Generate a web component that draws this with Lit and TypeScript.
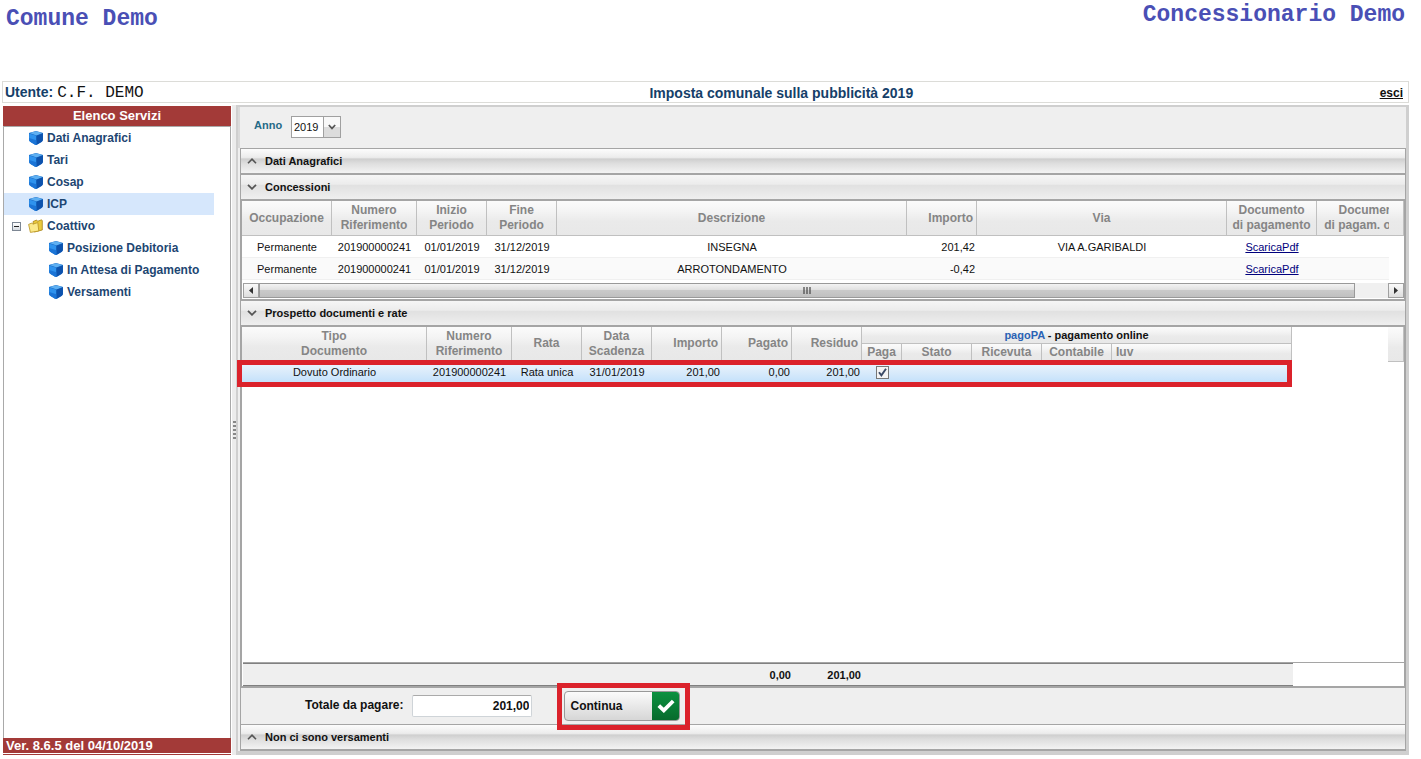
import { LitElement, html, css, svg } from "lit";
import { customElement, property, state } from "lit/decorators.js";
import { classMap } from "lit/directives/class-map.js";

interface Concessione {
  occupazione: string;
  numero: string;
  inizio: string;
  fine: string;
  descrizione: string;
  importo: string;
  via: string;
}

const CONCESSIONI: Concessione[] = [
  { occupazione: "Permanente", numero: "201900000241", inizio: "01/01/2019", fine: "31/12/2019", descrizione: "INSEGNA", importo: "201,42", via: "VIA A.GARIBALDI" },
  { occupazione: "Permanente", numero: "201900000241", inizio: "01/01/2019", fine: "31/12/2019", descrizione: "ARROTONDAMENTO", importo: "-0,42", via: "" },
];

const chevronUp = html`<svg class="chev" width="10" height="6" viewBox="0 0 10 6">${svg`<path d="M1 5.2 5 1.2 9 5.2" fill="none" stroke="#555" stroke-width="1.6"/>`}</svg>`;
const chevronDown = html`<svg class="chev" width="10" height="6" viewBox="0 0 10 6">${svg`<path d="M1 .8 5 4.8 9 .8" fill="none" stroke="#555" stroke-width="1.8"/>`}</svg>`;

const cubeIcon = html`<svg width="14" height="14" viewBox="0 0 14 14" aria-hidden="true">
  <path d="M0 2 7 0l7 2v6.5q0 1.6-1.4 2.4L8 13.8q-1 .5-2 0L1.4 10.9Q0 10 0 8.5z" fill="#1766c0"/>
  <path d="M.3 2.1 7 .2l6.7 1.9L7.6 4.4z" fill="#5fb0f2"/>
  <path d="M.2 2.5 7.4 4.8v9Q6.6 14 6 13.6L1.4 10.7Q.2 10 .2 8.4z" fill="#2f93ee"/>
  <path d="M7.4 4.8l6.4-2.3v6q0 1.4-1.2 2.2L7.4 13.8z" fill="#0d52ad"/>
  <path d="M.2 7 7.4 9.2v4.6Q6.6 14 6 13.6L1.4 10.7Q.2 10 .2 8.4z" fill="#1b74d6"/>
</svg>`;

const folderIcon = html`<svg width="15" height="14" viewBox="0 0 15 14" aria-hidden="true">
  <path d="M5 2.6 8.6 1l1 1.3L13.6.8l.7 1V11l-8 2z" fill="#e9c93c" stroke="#a8841a" stroke-width=".8"/>
  <path d="M.6 5.4 3.8 4l1 1.2 5-1.6 1 8.4-8.4 1.4z" fill="#fbe98a" stroke="#b8921f" stroke-width=".8"/>
</svg>`;

@customElement("service-item")
export class ServiceItem extends LitElement {
  @property() label = "";
  @property({ type: Number }) level = 0;
  @property({ type: Boolean }) active = false;
  @property({ type: Boolean }) folder = false;

  static styles = css`
    :host { display: block; margin-right: 16px; }
    .item {
      display: flex; align-items: center; gap: 4px; height: 22px; padding-left: 25px;
      font: bold 12px/22px "Liberation Sans", Arial, sans-serif; color: #1d4672; text-decoration: none;
    }
    .nested { padding-left: 45px; }
    .folder { padding-left: 8px; }
    .active { background: #d6e7fc; }
    .toggle {
      width: 9px; height: 9px; padding: 0; margin-right: 3px; border: 1px solid #7d8794;
      background: linear-gradient(#fff, #d5dae0); display: grid; place-items: center;
    }
    .toggle::before { content: ""; width: 5px; height: 1px; background: #222; }
    svg { flex: none; }
  `;

  render() {
    const cls = classMap({ item: true, nested: this.level > 0, folder: this.folder, active: this.active });
    return this.folder
      ? html`<div class=${cls}><button class="toggle" aria-label="Comprimi"></button>${folderIcon}<span>${this.label}</span></div>`
      : html`<a class=${cls} href="#">${cubeIcon}<span>${this.label}</span></a>`;
  }
}

@customElement("section-bar")
export class SectionBar extends LitElement {
  @property() label = "";
  @property({ type: Boolean }) open = false;

  static styles = css`
    :host { display: block; }
    .bar {
      display: flex; align-items: center; gap: 8px; width: 100%; height: 24px; padding: 0 6px; border: 0;
      background: linear-gradient(#fcfcfc 0%, #ececec 35%, #cfcfcf 42%, #dedede 60%, #f3f3f3 100%);
      font: bold 11px/24px "Liberation Sans", Arial, sans-serif; color: #111; text-align: left;
    }
    .open { background: linear-gradient(#f6f6f6 0%, #ececec 38%, #e1e1e1 44%, #e6e6e6 65%, #efefef 100%); }
    .chev { flex: none; }
  `;

  render() {
    return html`<button class=${classMap({ bar: true, open: this.open })} aria-expanded=${this.open}>
      ${this.open ? chevronDown : chevronUp}<span>${this.label}</span>
    </button>`;
  }
}

@customElement("app-root")
export class AppRoot extends LitElement {
  @state() private anno = "2019";

  static styles = css`
    :host {
      display: flex; flex-direction: column; box-sizing: border-box; min-height: 100vh;
      padding: 0 12px 4px 2px; background: #fff; color: #111;
      font: 11px/16px "Liberation Sans", Arial, sans-serif;
    }
    * { box-sizing: border-box; }

    .brand {
      display: flex; justify-content: space-between; height: 81px; padding: 2px 4px 0;
      font: bold 23px/26px "Liberation Mono", "Courier New", monospace; color: #4a4fb5;
    }
    .brand .left { padding-top: 4px; }

    .userbar {
      display: grid; grid-template-columns: 178px 1fr auto; align-items: center; height: 22px;
      padding: 0 5px 0 2px; border: 1px solid #dcdcd8;
      font-size: 14px; font-weight: bold; color: #154069; line-height: 20px;
    }
    .userbar .code { margin-left: 4px; font: 16px/20px "Liberation Mono", "Courier New", monospace; color: #111; }
    .userbar .title { margin: 0; font-size: 14px; text-align: center; }
    .userbar .exit { font-size: 12px; color: #111; }

    .body { flex: 1; display: grid; grid-template-columns: 229px 5px 1fr; margin-top: 2px; }

    .side { display: flex; flex-direction: column; margin: 1px 0 0 1px; }
    .side .head { height: 20px; background: #a33a38; color: #fff; text-align: center; font: bold 13px/20px "Liberation Sans", Arial, sans-serif; }
    .side nav { flex: 1; border: 1px solid #a9a9a9; border-width: 1px 1px 0; }
    .side .foot {
      height: 17px; padding-left: 3px; color: #fff; font: bold 13px/16px "Liberation Sans", Arial, sans-serif;
      background: linear-gradient(#a33a38 15px, #fff 15px 16px, #a33a38 16px);
    }

    .split { display: grid; place-items: center; background: #ececec; border-left: 1px solid #fff; }
    .grip { width: 3px; height: 18px; background: repeating-linear-gradient(#888 0 2px, transparent 2px 4px); }

    .main {
      display: flex; flex-direction: column; min-width: 0;
      border: solid #cfcfcf; border-width: 2px 3px 4px 2px; background: #efefef;
    }
    .year { display: flex; align-items: flex-start; height: 41px; padding: 9px 0 0 14px; border-left: 2px solid #dadada; }
    .year label { width: 37px; font: bold 11px/18px "Liberation Sans", Arial, sans-serif; color: #256a87; }
    .combo { display: grid; width: 50px; height: 22px; }
    .combo > * { grid-area: 1 / 1; }
    .combo select {
      appearance: none; width: 50px; height: 22px; padding: 0 0 0 2px; border: 1px solid #a0a0a0; border-radius: 0;
      background: #fff; font: 11px/20px "Liberation Sans", Arial, sans-serif; color: #111;
    }
    .combo .arrow {
      justify-self: end; display: grid; place-items: center; width: 18px; height: 22px; pointer-events: none;
      border: 1px solid #a0a0a0; background: linear-gradient(#f8f8f8 50%, #dcdcdc 50%);
    }

    .stack { flex: 1; display: flex; flex-direction: column; margin-left: 2px; border: 1px solid #a5a5a5; border-width: 1px 1px 2px; }
    .line { border-top: 2px solid #a5a5a5; }
    .pane { border: solid #a5a5a5; border-width: 2px 1px; background: #fff; min-width: 0; }

    table { border-collapse: separate; border-spacing: 0; table-layout: fixed; }
    th {
      padding: 0; border: solid #c0c0c0; border-width: 0 1px 1px 0; font: bold 12px/15px "Liberation Sans", Arial, sans-serif; color: #858585;
      text-align: center;
    }
    td { height: 22px; padding: 0; text-align: center; font-size: 11px; line-height: 16px; white-space: nowrap; }
    th.num { text-align: right; padding-right: 3px; }
    td.num { text-align: right; padding-right: 2px; }
    td a { color: #00007d; }
    th, .corner { background: linear-gradient(#fbfbfb, #f4f4f4 30%, #eaeaea 60%, #e8e8e8); }

    .concessioni { display: grid; grid-template-columns: minmax(0, 1fr) 15px; grid-template-rows: 79px 19px; }
    .clip { overflow: hidden; }
    .concessioni table { width: 1185px; }
    .concessioni thead th { height: 35px; }
    .concessioni td { border-bottom: 1px solid #f0f0f0; }
    .concessioni tbody tr:nth-child(2) { background: #fafafa; }
    .corner { height: 35px; border: solid #c0c0c0; border-width: 0 1px 1px 0; }
    .scroll { grid-column: 1 / 3; display: flex; height: 15px; margin: 3px 0 0 1px; background: #f0f0f0; }
    .scroll button { width: 16px; padding: 0; border: 1px solid #a0a0a0; background: linear-gradient(#fafafa, #dedede); display: grid; place-items: center; }
    .thumb {
      flex: 1; display: grid; place-items: center; margin-right: 33px; border: 1px solid #999;
      background: linear-gradient(#f3f3f3, #e0e0e0 45%, #c9c9c9 50%, #c0c0c0);
    }

    .documenti { position: relative; flex: 1; display: flex; flex-direction: column; border-left-width: 1px; }
    .documenti .top { display: flex; justify-content: space-between; }
    .documenti table { width: 1050px; }
    .documenti .corner { width: 16px; }
    .documenti thead tr { height: 17px; }
    .documenti .group { color: #111; font-size: 11px; text-align: center; }
    .group span { color: #2a62b4; }
    th.iuv { text-align: left; padding-left: 4px; }
    .picked { background: linear-gradient(#eef6fe, #dcecfb 45%, #c2e0fb); }
    .check {
      appearance: none; display: block; width: 13px; height: 13px; margin: 0 auto; border: 1px solid #777; background: #f4f4f4;
    }
    .tick { display: grid; place-items: center; width: 13px; height: 13px; margin: 0 auto; }
    .tick > * { grid-area: 1 / 1; pointer-events: none; }
    .space { flex: 1; }
    .sums { border-top: 1px solid #a5a5a5; margin-left: 1px; }
    .sums td { height: 23px; font-weight: bold; background: #efefef; border: solid #808080; border-width: 1px 0; }

    .mark { position: absolute; border: 5px solid #db222b; pointer-events: none; }
    .mark-row { left: -5px; top: 33px; width: 1055px; height: 27px; }
    .mark-go { inset: -8px -10px -9px -7px; }

    .total { display: flex; align-items: flex-start; height: 37px; padding: 3px 0 0 64px; border-bottom: 1px solid #a5a5a5; }
    .total label { font: bold 12px/28px "Liberation Sans", Arial, sans-serif; }
    .total input {
      width: 120px; height: 22px; margin: 4px 32px 0 9px; padding: 0 2px; border: 1px solid #cfd4d8; border-top-color: #aaa; border-radius: 2px;
      background: #fff; text-align: right; font: bold 12px/20px "Liberation Sans", Arial, sans-serif; color: #111;
    }
    .go { position: relative; }
    .continua {
      display: flex; justify-content: space-between; align-items: center; width: 116px; height: 30px; padding: 0 0 0 5px;
      border: 1px solid #999; border-radius: 4px; overflow: hidden; background: linear-gradient(#fbfbfb, #d6d6d6);
      font: bold 12px/28px "Liberation Sans", Arial, sans-serif; color: #111;
    }
    .continua .ok { display: grid; place-items: center; width: 27px; height: 28px; background: linear-gradient(#0c9140, #076b2d); }
  `;

  private renderConcessioni() {
    return html`
      <div class="pane concessioni">
        <div class="clip">
          <table>
            <colgroup>
              ${[90, 85, 70, 70, 350, 70, 250, 90, 110].map((w) => html`<col style="width:${w}px" />`)}
            </colgroup>
            <thead>
              <tr>
                <th>Occupazione</th><th>Numero<br />Riferimento</th><th>Inizio<br />Periodo</th><th>Fine<br />Periodo</th>
                <th>Descrizione</th><th class="num">Importo</th><th>Via</th>
                <th>Documento<br />di pagamento</th><th>Documento<br />di pagam. online</th>
              </tr>
            </thead>
            <tbody>
              ${CONCESSIONI.map((r) => html`<tr>
                <td>${r.occupazione}</td><td>${r.numero}</td><td>${r.inizio}</td><td>${r.fine}</td><td>${r.descrizione}</td>
                <td class="num">${r.importo}</td><td>${r.via}</td><td><a href="#">ScaricaPdf</a></td><td></td>
              </tr>`)}
            </tbody>
          </table>
        </div>
        <div class="corner"></div>
        <div class="scroll">
          <button aria-label="Scorri a sinistra"><svg width="4" height="7" viewBox="0 0 4 7"><path d="M4 0v7L0 3.5z" fill="#333"/></svg></button>
          <div class="thumb"><svg width="8" height="7" viewBox="0 0 8 7"><path d="M1 0v7M4 0v7M7 0v7" stroke="#444" stroke-width="1.2"/></svg></div>
          <button aria-label="Scorri a destra"><svg width="4" height="7" viewBox="0 0 4 7"><path d="M0 0v7l4-3.5z" fill="#333"/></svg></button>
        </div>
      </div>`;
  }

  private docCols() {
    return html`<colgroup>
      ${[185, 85, 70, 70, 70, 70, 70, 40, 70, 70, 70, 180].map((w) => html`<col style="width:${w}px" />`)}
    </colgroup>`;
  }

  private renderDocumenti() {
    return html`
      <div class="pane documenti">
        <div class="top">
          <table>
            ${this.docCols()}
            <thead>
              <tr>
                <th rowspan="2">Tipo<br />Documento</th><th rowspan="2">Numero<br />Riferimento</th><th rowspan="2">Rata</th>
                <th rowspan="2">Data<br />Scadenza</th><th rowspan="2" class="num">Importo</th><th rowspan="2" class="num">Pagato</th>
                <th rowspan="2" class="num">Residuo</th><th colspan="5" class="group"><span>pagoPA</span> - pagamento online</th>
              </tr>
              <tr><th>Paga</th><th>Stato</th><th>Ricevuta</th><th>Contabile</th><th class="iuv">Iuv</th></tr>
            </thead>
            <tbody>
              <tr class="picked">
                <td>Dovuto Ordinario</td><td>201900000241</td><td>Rata unica</td><td>31/01/2019</td>
                <td class="num">201,00</td><td class="num">0,00</td><td class="num">201,00</td>
                <td><div class="tick">
                  <input class="check" type="checkbox" aria-label="Paga" checked />
                  <svg width="9" height="9" viewBox="0 0 9 9"><path d="M1 4.2 3.4 7.4 8 .8" fill="none" stroke="#3b4a66" stroke-width="1.9"/></svg>
                </div></td>
                <td></td><td></td><td></td><td></td>
              </tr>
            </tbody>
          </table>
          <div class="corner"></div>
        </div>
        <div class="space"></div>
        <div class="sums">
          <table>
            ${this.docCols()}
            <tbody>
              <tr><td colspan="5"></td><td class="num">0,00</td><td class="num">201,00</td><td colspan="5"></td></tr>
            </tbody>
          </table>
        </div>
        <div class="mark mark-row"></div>
      </div>`;
  }

  render() {
    return html`
      <header class="brand"><span class="left">Comune Demo</span><span>Concessionario Demo</span></header>
      <div class="userbar">
        <div>Utente:<span class="code">C.F. DEMO</span></div>
        <h1 class="title">Imposta comunale sulla pubblicità 2019</h1>
        <a class="exit" href="#">esci</a>
      </div>
      <div class="body">
        <aside class="side">
          <div class="head">Elenco Servizi</div>
          <nav>
            <service-item label="Dati Anagrafici"></service-item>
            <service-item label="Tari"></service-item>
            <service-item label="Cosap"></service-item>
            <service-item label="ICP" active></service-item>
            <service-item label="Coattivo" folder></service-item>
            <service-item label="Posizione Debitoria" level="1"></service-item>
            <service-item label="In Attesa di Pagamento" level="1"></service-item>
            <service-item label="Versamenti" level="1"></service-item>
          </nav>
          <div class="foot">Ver. 8.6.5 del 04/10/2019</div>
        </aside>
        <div class="split"><div class="grip"></div></div>
        <main class="main">
          <div class="year">
            <label for="anno">Anno</label>
            <div class="combo">
              <select id="anno" @change=${(e: Event) => (this.anno = (e.target as HTMLSelectElement).value)}>
                <option selected>${this.anno}</option>
              </select>
              <span class="arrow"><svg width="8" height="6" viewBox="0 0 8 6"><path d="M.8 1 4 4.4 7.2 1" fill="none" stroke="#555" stroke-width="1.7"/></svg></span>
            </div>
          </div>
          <div class="stack">
            <section-bar label="Dati Anagrafici"></section-bar>
            <div class="line"></div>
            <section-bar label="Concessioni" open></section-bar>
            ${this.renderConcessioni()}
            <section-bar label="Prospetto documenti e rate" open></section-bar>
            ${this.renderDocumenti()}
            <div class="total">
              <label for="totale">Totale da pagare:</label>
              <input id="totale" .value=${"201,00"} />
              <div class="go">
                <button class="continua">Continua<span class="ok"><svg width="18" height="14" viewBox="0 0 18 14"><path d="M1.8 6.6 6.8 11.4 16.2 2" fill="none" stroke="#fff" stroke-width="3.8"/></svg></span></button>
                <div class="mark mark-go"></div>
              </div>
            </div>
            <section-bar label="Non ci sono versamenti"></section-bar>
          </div>
        </main>
      </div>
    `;
  }
}
